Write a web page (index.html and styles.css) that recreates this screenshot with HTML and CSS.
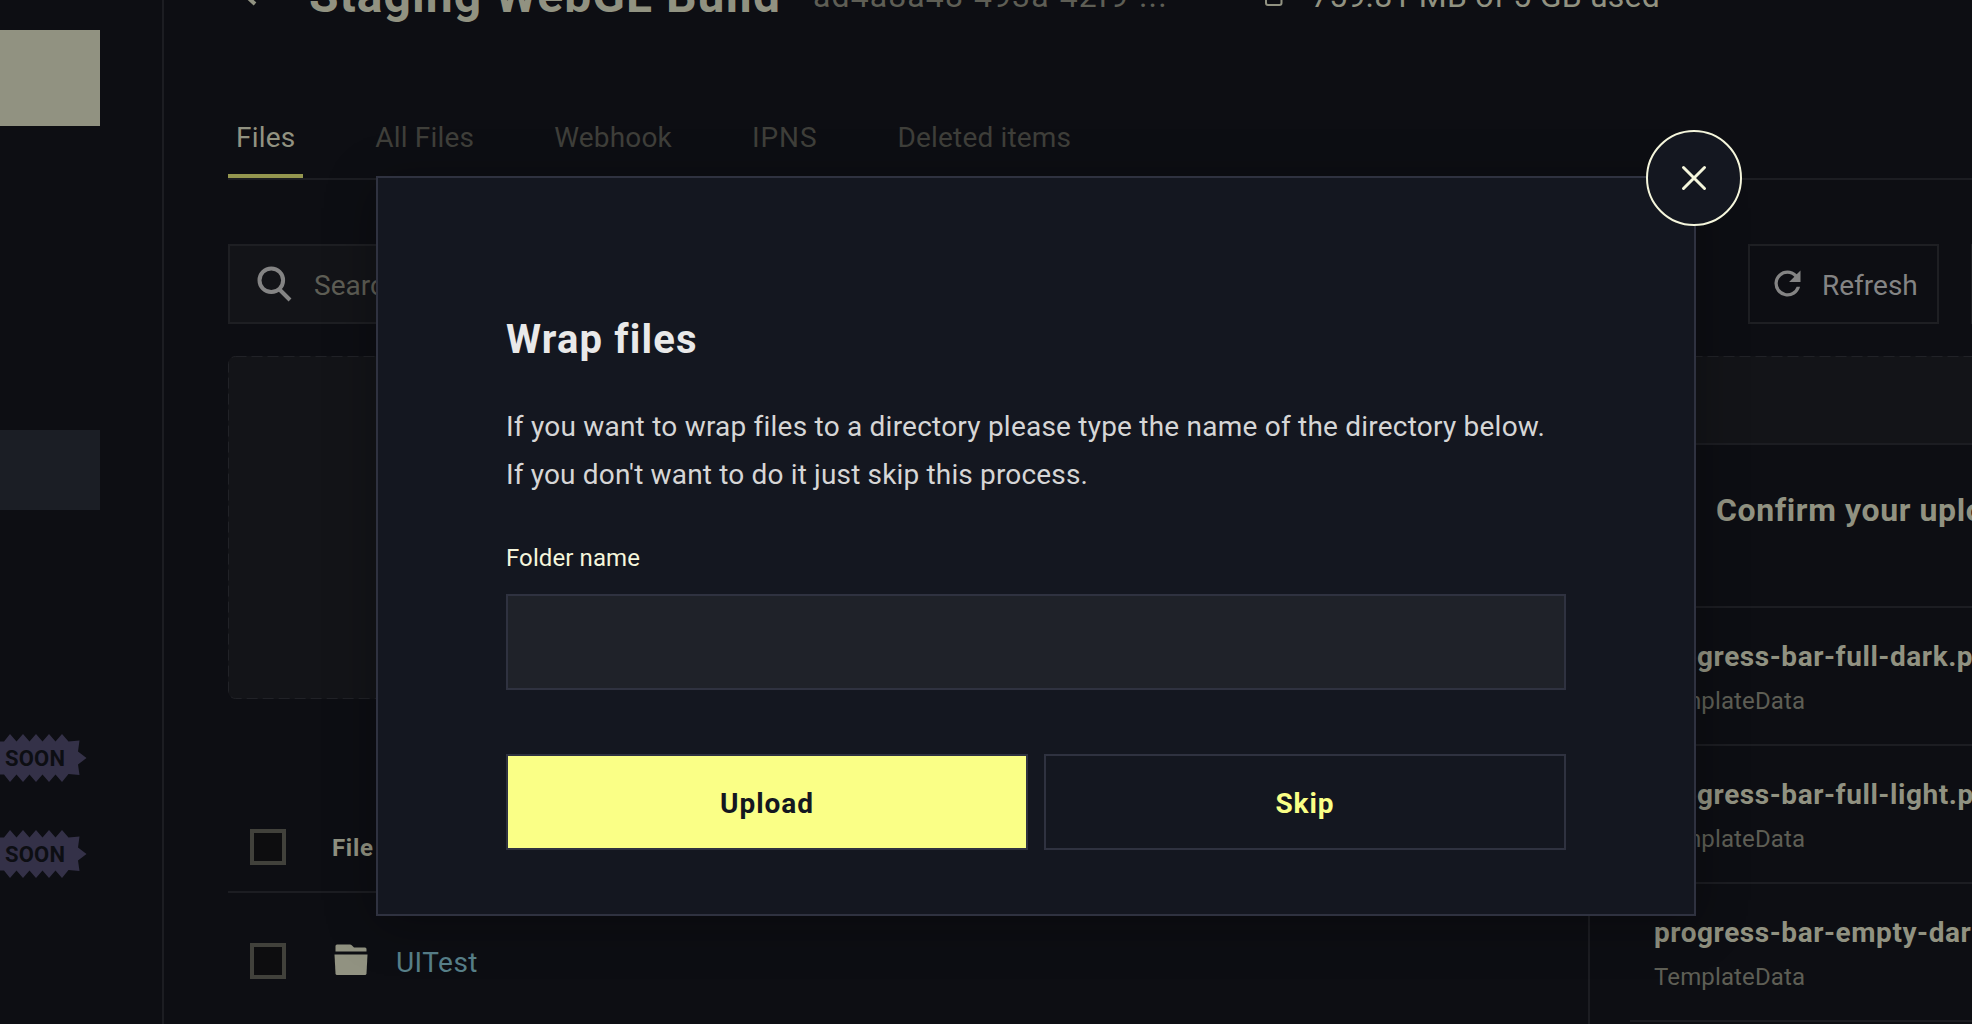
FILE: index.html
```html
<!DOCTYPE html>
<html lang="en">
<head>
<meta charset="utf-8">
<title>Wrap files</title>
<link rel="stylesheet" href="styles.css">
</head>
<body>
<div class="app">
  <aside class="sidebar">
    <div class="side-cta"></div>
    <div class="side-active"></div>
    <div class="badge">
      <svg width="87" height="48" viewBox="0 0 87 48"><path d="M0 7.5H4L10 0l6.500 7.500L23 0l6.500 7.500L36 0l6.500 7.500L49 0l6.500 7.500L62 0l6.500 7.500L79.500 6.500 78 17.500l8.500 6.500-8.500 6.500 1.500 10.500-11-1L62 48l-6.500-7.500L49 48l-6.500-7.500L36 48l-6.500-7.500L23 48l-6.500-7.500L10 48l-6-7.500H0z"/></svg>
      <span>SOON</span>
    </div>
    <div class="badge">
      <svg width="87" height="48" viewBox="0 0 87 48"><path d="M0 7.5H4L10 0l6.500 7.500L23 0l6.500 7.500L36 0l6.500 7.500L49 0l6.500 7.500L62 0l6.500 7.500L79.500 6.500 78 17.500l8.500 6.500-8.500 6.500 1.500 10.500-11-1L62 48l-6.500-7.500L49 48l-6.500-7.500L36 48l-6.500-7.500L23 48l-6.500-7.500L10 48l-6-7.500H0z"/></svg>
      <span>SOON</span>
    </div>
  </aside>
  <main class="main">
    <header class="header">
      <svg class="back" width="20" height="28" viewBox="0 0 20 28"><path d="M17 2 4 14l13 12"/></svg>
      <h1 class="title">Staging WebGL Build</h1>
      <span class="uuid">ad4a8a48-493a-42f9-...</span>
      <svg class="storage" width="18" height="24" viewBox="0 0 18 24"><rect x="1" y="1" width="15.500" height="22" rx="2"/></svg>
      <span class="usage">759.81 MB of 5 GB used</span>
    </header>
    <nav class="tabs">
      <a class="tab tab-active">Files</a>
      <a class="tab">All Files</a>
      <a class="tab">Webhook</a>
      <a class="tab tab-ipns">IPNS</a>
      <a class="tab">Deleted items</a>
    </nav>
    <div class="toolbar">
      <div class="search">
        <svg width="36" height="36" viewBox="0 0 36 36"><circle cx="15.300" cy="14.300" r="11.800"/><path d="M23.500 23.500 34 34"/></svg>
        <span>Search</span>
      </div>
      <button class="tool-btn refresh">
        <svg width="39" height="39" viewBox="0 0 24 24"><path d="M17.650 6.350A7.960 7.960 0 0 0 12 4a8 8 0 1 0 7.730 10h-2.080A6 6 0 1 1 12 6c1.660 0 3.140.690 4.220 1.780L13 11h7V4z"/></svg>
        <span>Refresh</span>
      </button>
      <button class="tool-btn next"></button>
    </div>
    <div class="dropzone">
      <svg width="100%" height="100%"><rect x="0.500" y="0.500" width="99.900%" height="342" rx="7"/></svg>
    </div>
    <div class="table">
      <div class="row row-head"><i class="check"></i><span class="col-name">File name</span></div>
      <div class="row">
        <i class="check"></i>
        <svg class="folder" width="34" height="32" viewBox="0 0 34 32"><path d="M1.500 7.500V2Q1.500.500 3 .500H16Q17 .500 18 1.500L20 3.500H31Q32.500 3.500 32.500 5V7.500z"/><path d="M.500 10.500H33.500L32.500 29.500Q32.300 31 31 31H3Q1.700 31 1.500 29.500z"/></svg>
        <span class="file-link">UITest</span>
      </div>
    </div>
  </main>
</div>

<section class="panel">
  <h2 class="panel-title">Confirm your upload</h2>
  <ul class="uploads">
    <li><b>progress-bar-full-dark.png</b><span>TemplateData</span></li>
    <li><b>progress-bar-full-light.png</b><span>TemplateData</span></li>
    <li><b>progress-bar-empty-dark.png</b><span>TemplateData</span></li>
    <li></li>
  </ul>
</section>

<div class="modal">
  <button class="close"><svg width="28" height="28" viewBox="0 0 28 28"><path d="M3.500 3.500 24.500 24.500M24.500 3.500 3.500 24.500"/></svg></button>
  <h3 class="modal-title">Wrap files</h3>
  <p class="modal-text">If you want to wrap files to a directory please type the name of the directory below.<br><span class="modal-line">If you don't want to do it just skip this process.</span></p>
  <label class="label" for="folder">Folder name</label>
  <input class="input" id="folder" type="text">
  <div class="actions">
    <button class="btn btn-primary">Upload</button>
    <button class="btn">Skip</button>
  </div>
</div>
</body>
</html>
```
FILE: styles.css
```css
* { box-sizing: border-box; }

body {
  margin: 0;
  height: 1024px;
  position: relative;
  overflow: hidden;
  background: #0d0e13;
  font: 400 28px/36px Roboto, "Liberation Sans", sans-serif;
  color: #919281;
}

h1, h2, h3, p, ul { margin: 0; padding: 0; }
ul { list-style: none; }
svg { display: block; flex: none; }
button { font: inherit; color: inherit; background: none; padding: 0; margin: 0; }

.app { display: flex; height: 1024px; overflow: hidden; }

.sidebar {
  flex: none;
  width: 164px;
  padding-top: 30px;
  border-right: 2px solid #1c1d22;
}
.side-cta { width: 100px; height: 96px; background: #919281; }
.side-active { width: 100px; height: 80px; margin-top: 304px; margin-bottom: 224px; background: #1b1e25; }

.badge { display: grid; align-items: center; margin-bottom: 48px; }
.badge svg, .badge span { grid-area: 1 / 1; }
.badge svg { fill: #343148; }
.badge span {
  padding: 2px 0 0 5px;
  font-size: 22px;
  line-height: 24px;
  font-weight: 700;
  letter-spacing: .2px;
  color: #0d0e13;
}

.main { flex: none; width: 1908px; padding-left: 64px; }

.header { display: flex; align-items: center; height: 60px; margin-top: -34px; white-space: nowrap; }
.back { margin: -8px 0 0 10px; fill: none; stroke: #919281; stroke-width: 4; }
.title { margin-left: 51px; width: 504px; font-size: 48px; line-height: 60px; letter-spacing: 1.02px; }
.uuid { width: 453px; font-size: 32px; letter-spacing: 1.1px; color: #5e5e55; }
.storage { margin-top: -4px; margin-left: -1px; fill: none; stroke: #919281; stroke-width: 2; }
.usage { margin-left: 28px; font-size: 32px; letter-spacing: .22px; }

.tabs { display: flex; gap: 64px; margin-top: 94px; border-bottom: 2px solid #1c1d22; }
.tab { padding: 0 8px 18px; border-bottom: 4px solid transparent; letter-spacing: .18px; color: #3f3f3a; }
.tab-active { color: #919281; border-color: #94964f; }
.tab-ipns { letter-spacing: .9px; }

.toolbar { display: flex; margin-top: 64px; }
.search {
  display: flex;
  align-items: center;
  width: 1200px;
  height: 80px;
  padding-left: 26px;
  border: 2px solid #1e1f23;
  background: #131418;
  color: #5e5e55;
}
.search svg { fill: none; stroke: #848484; stroke-width: 4; }
.search span { margin-left: 22px; padding-top: 3px; }
.tool-btn { display: flex; align-items: center; height: 80px; border: 2px solid #1e1f23; color: #848484; }
.refresh { width: 191px; margin-left: 320px; padding-left: 18px; }
.refresh svg { fill: #848484; margin-top: -1px; }
.refresh span { margin-left: 15px; padding-top: 3px; }
.next { width: 100px; margin-left: 32px; }

.dropzone { height: 343px; margin-top: 32px; border-radius: 8px; background: #131418; }
.dropzone rect { fill: none; stroke: #212227; stroke-width: 1; stroke-dasharray: 11 5; }

.table { margin-top: 104px; }
.row { display: flex; align-items: center; height: 138px; padding-left: 22px; border-bottom: 2px solid #1c1d22; }
.row-head { height: 90px; }
.check { width: 36px; height: 36px; border: 4px solid #41413b; background: #0d0d0f; }
.col-name { margin-left: 46px; padding-top: 1px; font-size: 24px; font-weight: 700; letter-spacing: .7px; }
.folder { margin-left: 48px; margin-top: -2px; fill: #919281; }
.file-link { margin-left: 28px; padding-top: 3px; color: #58808a; letter-spacing: .45px; }

.panel {
  position: absolute;
  left: 1588px;
  top: 443px;
  right: 0;
  bottom: 0;
  overflow: hidden;
  border: solid #1c1d22;
  border-width: 2px 0 0 2px;
  background: #0d0e13;
  white-space: nowrap;
}
.panel-title { padding: 45px 0 76px 126px; font-size: 32px; line-height: 40px; letter-spacing: .6px; }
.uploads { margin-left: 40px; }
.uploads li { height: 138px; padding: 31px 0 0 24px; border-top: 2px solid #1c1d22; }
.uploads b, .uploads span { display: block; }
.uploads b { letter-spacing: .56px; }
.uploads span { margin-top: 10px; font-size: 24px; line-height: 32px; letter-spacing: .13px; color: #5e5e55; }

.modal {
  position: absolute;
  left: 376px;
  top: 176px;
  width: 1320px;
  height: 740px;
  padding: 138px 128px 0;
  border: 2px solid #2f3240;
  background: #141720;
  box-shadow: 0 8px 48px rgba(0, 0, 0, .3);
}
.close {
  position: absolute;
  top: -48px;
  right: -48px;
  display: flex;
  align-items: center;
  justify-content: center;
  width: 96px;
  height: 96px;
  border: 2px solid #f5f6dc;
  border-radius: 50%;
  background: #141720;
}
.close svg { fill: none; stroke: #f5f6dc; stroke-width: 3; stroke-linecap: round; }
.modal-title { font-size: 40px; line-height: 48px; letter-spacing: 1.15px; color: #e9e9e9; }
.modal-text { margin-top: 39px; line-height: 48px; letter-spacing: .22px; white-space: nowrap; color: #d6d6d6; }
.modal-line { letter-spacing: .16px; }
.label { display: block; margin-top: 43px; font-size: 24px; line-height: 32px; letter-spacing: .1px; color: #f5f6dc; }
.input {
  display: block;
  width: 1060px;
  height: 96px;
  margin-top: 20px;
  border: 2px solid #2f3240;
  background: #1f2229;
}
.actions { display: grid; grid-template-columns: 1fr 1fr; gap: 16px; margin-top: 64px; }
.btn { height: 96px; padding-top: 3px; border: 2px solid #2f3240; font-weight: 700; letter-spacing: .95px; color: #faff86; }
.btn-primary { background: #faff86; color: #141720; }
```
